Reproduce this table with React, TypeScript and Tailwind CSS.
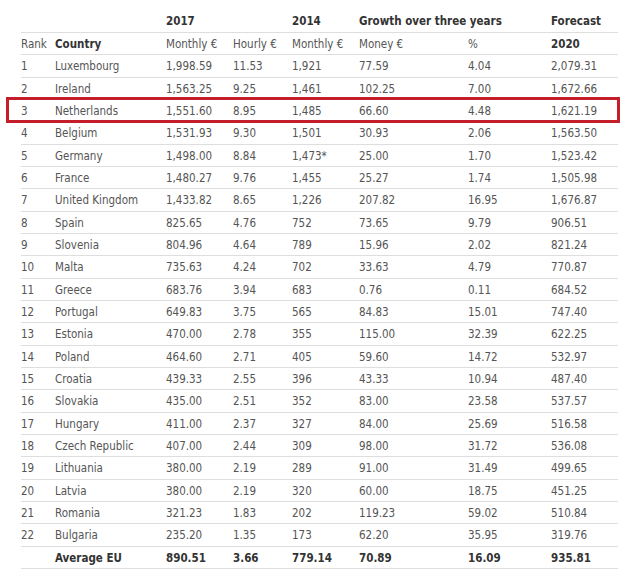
import React from 'react';

type Row = [string, string, string, string, string, string, string, string];

const rows: Row[] = [
  ['1', 'Luxembourg', '1,998.59', '11.53', '1,921', '77.59', '4.04', '2,079.31'],
  ['2', 'Ireland', '1,563.25', '9.25', '1,461', '102.25', '7.00', '1,672.66'],
  ['3', 'Netherlands', '1,551.60', '8.95', '1,485', '66.60', '4.48', '1,621.19'],
  ['4', 'Belgium', '1,531.93', '9.30', '1,501', '30.93', '2.06', '1,563.50'],
  ['5', 'Germany', '1,498.00', '8.84', '1,473*', '25.00', '1.70', '1,523.42'],
  ['6', 'France', '1,480.27', '9.76', '1,455', '25.27', '1.74', '1,505.98'],
  ['7', 'United Kingdom', '1,433.82', '8.65', '1,226', '207.82', '16.95', '1,676.87'],
  ['8', 'Spain', '825.65', '4.76', '752', '73.65', '9.79', '906.51'],
  ['9', 'Slovenia', '804.96', '4.64', '789', '15.96', '2.02', '821.24'],
  ['10', 'Malta', '735.63', '4.24', '702', '33.63', '4.79', '770.87'],
  ['11', 'Greece', '683.76', '3.94', '683', '0.76', '0.11', '684.52'],
  ['12', 'Portugal', '649.83', '3.75', '565', '84.83', '15.01', '747.40'],
  ['13', 'Estonia', '470.00', '2.78', '355', '115.00', '32.39', '622.25'],
  ['14', 'Poland', '464.60', '2.71', '405', '59.60', '14.72', '532.97'],
  ['15', 'Croatia', '439.33', '2.55', '396', '43.33', '10.94', '487.40'],
  ['16', 'Slovakia', '435.00', '2.51', '352', '83.00', '23.58', '537.57'],
  ['17', 'Hungary', '411.00', '2.37', '327', '84.00', '25.69', '516.58'],
  ['18', 'Czech Republic', '407.00', '2.44', '309', '98.00', '31.72', '536.08'],
  ['19', 'Lithuania', '380.00', '2.19', '289', '91.00', '31.49', '499.65'],
  ['20', 'Latvia', '380.00', '2.19', '320', '60.00', '18.75', '451.25'],
  ['21', 'Romania', '321.23', '1.83', '202', '119.23', '59.02', '510.84'],
  ['22', 'Bulgaria', '235.20', '1.35', '173', '62.20', '35.95', '319.76'],
];

const widths = ['w-[34px]', 'w-[111px]', 'w-[67px]', 'w-[59px]', 'w-[67px]', 'w-[109px]', 'w-[83px]', 'w-[67px]'];

const rowCls = 'h-[22.35px] border-b border-[#dedede]';
const cell = 'p-0 pt-[2px] whitespace-nowrap';

export default function App() {
  return (
    <div
      className="relative w-[640px] h-[586px] bg-white pt-[10px] pl-[21px] text-[11.5px] text-[#555]"
      style={{ fontFamily: '"DejaVu Sans Condensed", "DejaVu Sans", Verdana, sans-serif' }}
    >
      <table className="table-fixed border-collapse w-[597px]">
        <colgroup>
          {widths.map((w, i) => (
            <col key={i} className={w} />
          ))}
        </colgroup>
        <thead>
          <tr className={rowCls + ' font-bold text-[#333]'}>
            <th className={cell} />
            <th className={cell} />
            <th className={cell + ' text-left'}>2017</th>
            <th className={cell} />
            <th className={cell + ' text-left'}>2014</th>
            <th className={cell + ' text-left'} colSpan={2}>Growth over three years</th>
            <th className={cell + ' text-left'}>Forecast</th>
          </tr>
          <tr className={rowCls}>
            <th className={cell + ' text-left font-normal'}>Rank</th>
            <th className={cell + ' text-left font-bold text-[#333]'}>Country</th>
            <th className={cell + ' text-left font-normal'}>Monthly €</th>
            <th className={cell + ' text-left font-normal'}>Hourly €</th>
            <th className={cell + ' text-left font-normal'}>Monthly €</th>
            <th className={cell + ' text-left font-normal'}>Money €</th>
            <th className={cell + ' text-left font-normal'}>%</th>
            <th className={cell + ' text-left font-bold text-[#333]'}>2020</th>
          </tr>
        </thead>
        <tbody>
          {rows.map((r) => (
            <tr key={r[0]} className={rowCls}>
              {r.map((c, i) => (
                <td key={i} className={cell}>{c}</td>
              ))}
            </tr>
          ))}
          <tr className={rowCls + ' font-bold text-[#333]'}>
            <td className={cell} />
            <td className={cell}>Average EU</td>
            <td className={cell}>890.51</td>
            <td className={cell}>3.66</td>
            <td className={cell}>779.14</td>
            <td className={cell}>70.89</td>
            <td className={cell}>16.09</td>
            <td className={cell}>935.81</td>
          </tr>
        </tbody>
      </table>
      {/* highlight around the Netherlands row */}
      <div className="absolute left-[6px] top-[97px] w-[614px] h-[26px] border-[3px] border-[#c41e2a]" />
    </div>
  );
}
